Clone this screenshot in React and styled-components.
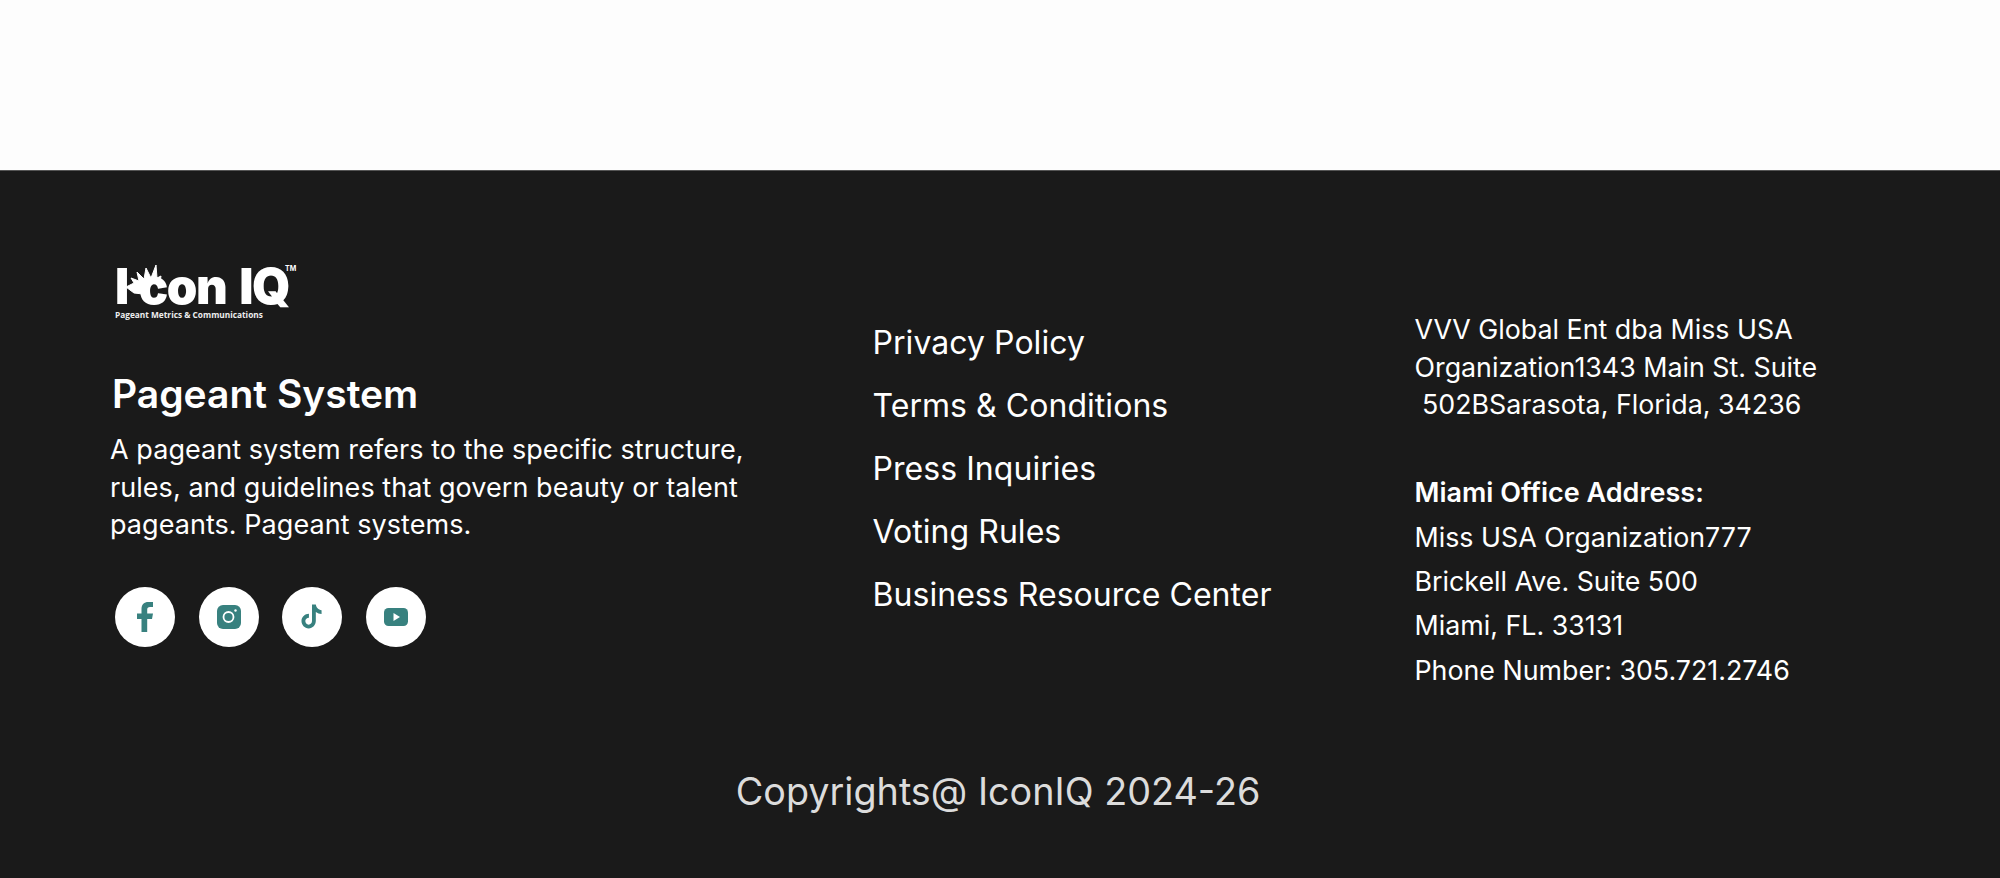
import styled, { createGlobalStyle } from "styled-components"

const GlobalStyle = createGlobalStyle`
    html, body {
        margin: 0;
        padding: 0;
        background: #fdfdfd;
        font-family: "Inter", "Liberation Sans", sans-serif;
    }
    * { box-sizing: border-box; }
`

const App = () => {
    return (
        <>
            <GlobalStyle />
            <TopSpace />
            <Footer>
                <Columns>
                    <About>
                        <Logo>
                            <LogoWord>
                                <LogoStem>I</LogoStem>
                                <Crown viewBox="0 0 40 32" aria-hidden="true">
                                    <path d="M2 23 L10 19 L7 14 L15 17 L13 8 L20 15 L22 4 L27 14 L32 1 L33 14 L37 12 L36 18 C28 17 22 22 19 30 L10 29 Z" fill="#fff" stroke="#fff" strokeWidth="1" strokeLinejoin="round" />
                                </Crown>
                                <span>con</span>
                                <LogoIq>IQ</LogoIq>
                                <LogoTm>TM</LogoTm>
                            </LogoWord>
                            <LogoTag>Pageant Metrics &amp; Communications</LogoTag>
                        </Logo>
                        <AboutTitle>Pageant System</AboutTitle>
                        <AboutText>
                            A pageant system refers to the specific structure,
                            <br />
                            rules, and guidelines that govern beauty or talent
                            <br />
                            pageants. Pageant systems.
                        </AboutText>
                        <Socials>
                            <Social href="#">
                                <svg width="16" height="30" viewBox="0 0 16 30">
                                    <path d="M4.500 30V17H0v-5.500h4.500V7C4.500 2.600 7.200 0 11.300 0H16v5h-3c-2 0-2.800 1-2.800 2.800v3.700H16l-1 5.500h-4.800v13z" fill="#38817f" />
                                </svg>
                            </Social>
                            <Social href="#">
                                <svg width="24" height="24" viewBox="0 0 24 24">
                                    <rect width="24" height="24" rx="6" fill="#38817f" />
                                    <circle cx="11.500" cy="12" r="5" fill="none" stroke="#fff" strokeWidth="1.800" />
                                    <circle cx="18.500" cy="5.500" r="1.200" fill="#fff" />
                                </svg>
                            </Social>
                            <Social href="#">
                                <svg width="22" height="25" viewBox="0 0 23 25">
                                    <path d="M11.500 0h4c.3 3 2.700 5.700 6 6v3.800c-2.200 0-4.200-.8-6-2V17c0 4.500-3.300 8-7.500 8S.500 21.500.500 17.300 4 9.700 8.300 9.700v4c-2.100 0-3.800 1.600-3.800 3.600S6 21 8 21s3.500-1.700 3.500-3.800z" fill="#38817f" />
                                </svg>
                            </Social>
                            <Social href="#">
                                <svg width="24" height="18" viewBox="0 0 24 18">
                                    <rect width="24" height="18" rx="4.500" fill="#38817f" />
                                    <path d="M9.500 5l6.500 4-6.500 4z" fill="#fff" />
                                </svg>
                            </Social>
                        </Socials>
                    </About>

                    <Links>
                        <FooterLink href="#">Privacy Policy</FooterLink>
                        <FooterLink href="#">Terms &amp; Conditions</FooterLink>
                        <FooterLink href="#">Press Inquiries</FooterLink>
                        <FooterLink href="#">Voting Rules</FooterLink>
                        <FooterLink href="#">Business Resource Center</FooterLink>
                    </Links>

                    <Contact>
                        <Address>
                            VVV Global Ent dba Miss USA
                            <br />
                            Organization1343 Main St. Suite
                            <br />
                            &nbsp;502BSarasota, Florida, 34236
                        </Address>
                        <OfficeTitle>Miami Office Address:</OfficeTitle>
                        <OfficeLine>Miss USA Organization777</OfficeLine>
                        <OfficeLine>Brickell Ave. Suite 500</OfficeLine>
                        <OfficeLine>Miami, FL. 33131</OfficeLine>
                        <OfficeLine>Phone Number: 305.721.2746</OfficeLine>
                    </Contact>
                </Columns>
                <Copyright>Copyrights@ IconIQ 2024-26</Copyright>
            </Footer>
        </>
    )
}

const TopSpace = styled.div`
    height: 170px;
    background: #fdfdfd;
`

const Footer = styled.footer`
    height: 708px;
    background: #1a1a1a;
    border-top: 1px solid #555;
    color: #fff;
    padding: 94px 0 0 110px;
`

const Columns = styled.div`
    display: grid;
    grid-template-columns: 762.500px 542px 1fr;
`

const About = styled.div`
    display: flex;
    flex-direction: column;
    align-items: flex-start;
`

const Logo = styled.div`
    margin-left: 5px;
    height: 56px;
    width: 182px;
`

const LogoWord = styled.div`
    position: relative;
    display: flex;
    height: 44px;
    font-weight: 900;
    font-size: 49px;
    line-height: 44px;
    letter-spacing: -1.500px;
    white-space: nowrap;
`

const LogoStem = styled.span`
    margin-right: 11px;
`

const LogoIq = styled.span`
    margin-left: 13px;
`

const Crown = styled.svg`
    position: absolute;
    left: 9px;
    top: -1px;
    width: 40px;
    height: 32px;
`

const LogoTm = styled.span`
    position: absolute;
    left: 170px;
    top: 0;
    font-size: 7px;
    line-height: 8px;
    letter-spacing: 0;
    font-weight: 700;
`

const LogoTag = styled.div`
    font-family: "Open Sans", sans-serif;
    font-weight: 700;
    font-size: 8.300px;
    line-height: 12px;
    color: #eee;
    white-space: nowrap;
`

const AboutTitle = styled.h3`
    margin: 49px 0 0 2px;
    font-weight: 600;
    font-size: 39px;
    line-height: 48px;
`

const AboutText = styled.p`
    margin: 13px 0 0;
    font-weight: 400;
    font-size: 27px;
    line-height: 37.500px;
    letter-spacing: 0.050px;
`

const Socials = styled.div`
    display: flex;
    gap: 23.700px;
    margin: 43px 0 0 5px;
`

const Social = styled.a`
    width: 60px;
    height: 60px;
    border-radius: 50%;
    background: #fff;
    display: flex;
    align-items: center;
    justify-content: center;
`

const Links = styled.nav`
    display: flex;
    flex-direction: column;
    align-items: flex-start;
    gap: 19px;
    padding-top: 56px;
`

const FooterLink = styled.a`
    color: #fff;
    text-decoration: none;
    font-size: 32px;
    font-weight: 400;
    line-height: 44px;
    letter-spacing: 0.050px;
`

const Contact = styled.div`
    padding-top: 46px;
    font-size: 26.800px;
    font-weight: 400;
`

const Address = styled.p`
    margin: 0;
    line-height: 37.500px;
`

const OfficeTitle = styled.h4`
    margin: 47px 0 0;
    font-size: 27px;
    font-weight: 600;
    line-height: 44px;
`

const OfficeLine = styled.p`
    margin: 1px 0 0;
    line-height: 43.400px;
`

const Copyright = styled.div`
    margin-top: 75px;
    margin-left: -114px;
    text-align: center;
    color: #dcdcdc;
    font-size: 37.750px;
    font-weight: 400;
    line-height: 48px;
`

export default App
